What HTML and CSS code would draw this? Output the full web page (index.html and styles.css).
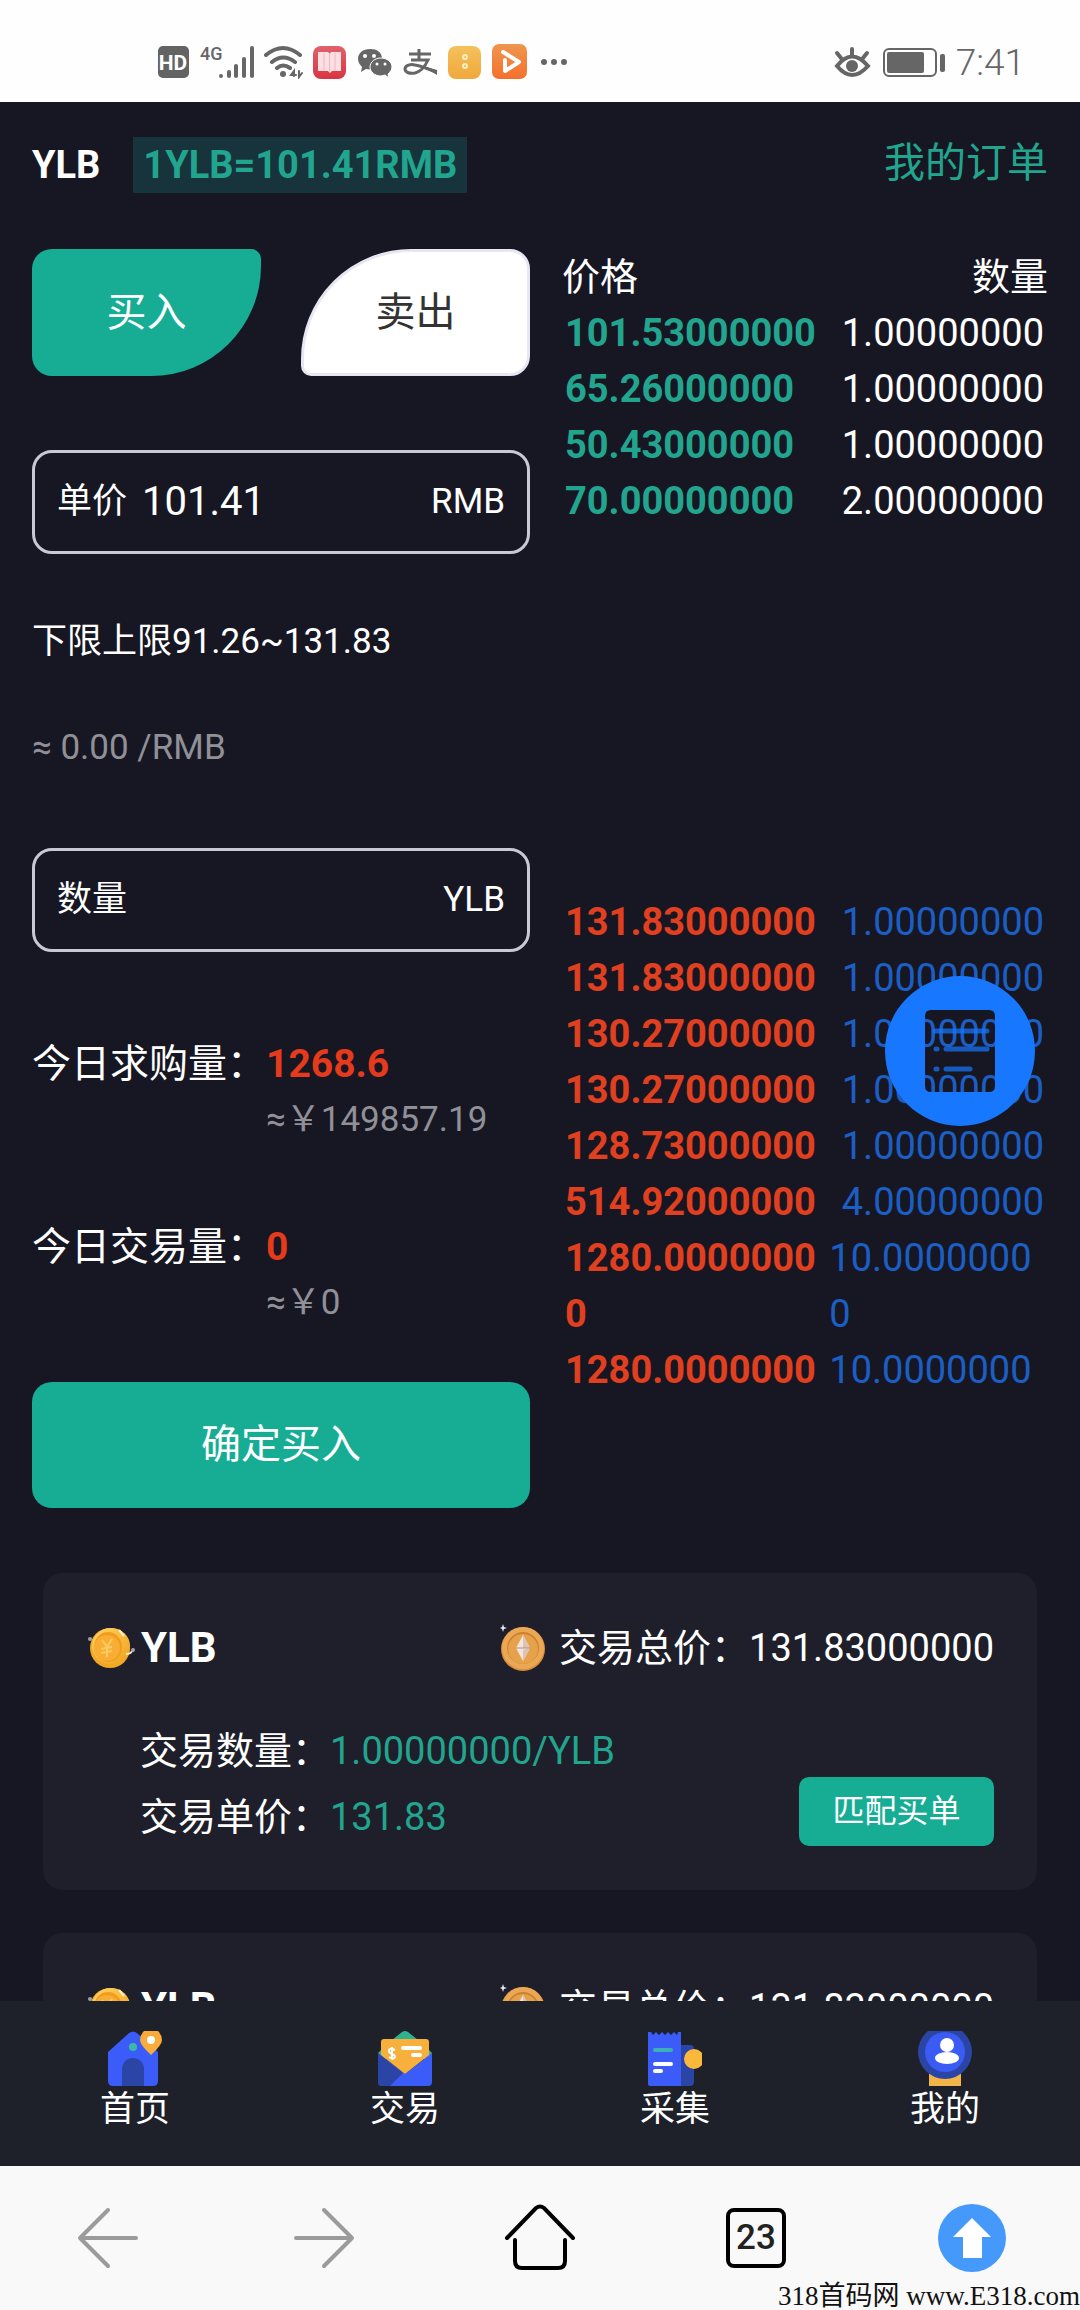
FILE: index.html
```html
<!DOCTYPE html>
<html lang="zh-CN">
<head>
<meta charset="utf-8">
<meta name="viewport" content="width=device-width, initial-scale=1">
<title>YLB 交易</title>
<link rel="stylesheet" href="styles.css">
</head>
<body>
<svg class="defs" aria-hidden="true">
  <defs>
    <linearGradient id="gold" x1="0" y1="0" x2="1" y2="1"><stop offset="0" stop-color="#ffd667"/><stop offset="1" stop-color="#f0a01c"/></linearGradient>
    <linearGradient id="red" x1="0" y1="0" x2="0" y2="1"><stop offset="0" stop-color="#e0626c"/><stop offset="1" stop-color="#d93443"/></linearGradient>
    <linearGradient id="amber" x1="0" y1="0" x2="0" y2="1"><stop offset="0" stop-color="#f5c15c"/><stop offset="1" stop-color="#efa83c"/></linearGradient>
    <linearGradient id="orange" x1="0" y1="0" x2="0" y2="1"><stop offset="0" stop-color="#ee9750"/><stop offset="1" stop-color="#f4702c"/></linearGradient>
    <symbol id="coin-yen" viewBox="0 0 48 44">
      <ellipse cx="22" cy="22" rx="20" ry="20" fill="#f2a822"/>
      <ellipse cx="23" cy="20" rx="19" ry="18" fill="url(#gold)"/>
      <ellipse cx="20" cy="21" rx="14" ry="15" fill="#f39c1c"/>
      <ellipse cx="19" cy="22" rx="13" ry="13" fill="#f8ae35"/>
      <path d="M14 14l5 7 5-8M19 21v10M13 23l11-2M13 27l11-2" fill="none" stroke="#fdca60" stroke-width="2"/>
      <path d="M31 4l5 6M38 28q5 0 6-3" stroke="#fff1c0" stroke-width="2" fill="none"/>
      <circle cx="2" cy="13" r="2" fill="#9da2ad"/><circle cx="45" cy="24" r="2" fill="#a3a3a8"/>
    </symbol>
    <symbol id="coin-eth" viewBox="0 0 46 48">
      <ellipse cx="23" cy="25" rx="22" ry="22" fill="#d88f3d"/>
      <ellipse cx="23" cy="24" rx="21" ry="21" fill="#eaa855"/>
      <circle cx="23" cy="24" r="16" fill="#cc8130"/>
      <circle cx="23" cy="25" r="15" fill="#e6a24a"/>
      <path d="M23 11l7 13-7 13-7-13z" fill="#f4e4dc"/>
      <path d="M23 11l7 13h-7zM23 26l7-2-7 13z" fill="#dcc3b8"/>
      <path d="M16 24h14" stroke="#b98a76" stroke-width="1"/>
      <path d="M3 0l1 3 3 1-3 1-1 3-1-3-2-1 2-1z" fill="#e3e3f2"/>
    </symbol>
  </defs>
</svg>
<div class="screen">
  <header class="status">
    <div class="status-group status-left">
      <svg width="32" height="34" viewBox="0 0 32 34"><rect y="1" width="31" height="32" rx="5" fill="#636363"/><text class="hd" x="15" y="25" text-anchor="middle">HD</text></svg>
      <svg width="54" height="34" viewBox="0 0 54 34"><text class="net" x="0" y="15">4G</text><g stroke="#666" stroke-width="4" stroke-linecap="round"><path d="M21 31v0M29 27v4M36 21v10M44 14v17M52 3v28"/></g></svg>
      <svg width="39" height="34" viewBox="0 0 39 34" fill="none" stroke="#666" stroke-width="4" stroke-linecap="round"><path d="M2 10q17-14 34 0M8 17q11-9 23 0M13 23q6-5 13 0"/><circle cx="19" cy="29" r="3" fill="#666" stroke="none"/><path d="M30 31V26l-3 4h5M35 26v6l3-4" stroke-width="2"/></svg>
      <svg width="33" height="34" viewBox="0 0 33 34"><rect y="1" width="33" height="33" rx="8" fill="url(#red)"/><path d="M5 7h10l2 2 1-2h10v19H19l-2 2-2-2H5z" fill="#fbdfe3"/><path d="M16.500 8v18M11 8v18M22 8v18" stroke="#f0b6bf" stroke-width="1"/></svg>
      <svg width="36" height="34" viewBox="0 0 36 34"><path d="M14 4C7 4 2 8 2 14c0 3 2 6 4 8l-1 5 5-3c10 2 16-3 16-10S21 4 14 4z" fill="#666"/><circle cx="9" cy="11" r="2" fill="#fff"/><circle cx="18" cy="11" r="2" fill="#fff"/><path d="M25 13c-6 0-11 4-11 9s5 9 11 9l4-1 4 3-1-4c2-2 4-4 4-7 0-5-5-9-11-9z" fill="#666" stroke="#fff" stroke-width="1"/><circle cx="21" cy="19" r="1.500" fill="#fff"/><circle cx="29" cy="19" r="1.500" fill="#fff"/></svg>
      <svg width="36" height="34" viewBox="0 0 36 34" fill="none" stroke="#666"><path d="M7 9h22M17 4v11M9 15h17q-5 11-13 13c-6 1-10-1-10-4 0-4 6-5 10-4 8 1 14 5 22 7" stroke-width="3"/><path d="M20 21l15 4v5z" fill="#666" stroke="none"/></svg>
      <svg width="33" height="34" viewBox="0 0 33 34"><rect y="1" width="33" height="33" rx="8" fill="url(#amber)"/><g fill="none" stroke="#fdeec2" stroke-width="2"><circle cx="17" cy="12" r="2"/><circle cx="17" cy="21" r="2"/></g></svg>
      <svg width="37" height="36" viewBox="0 0 37 36"><rect x="1" width="35" height="35" rx="7" fill="url(#orange)"/><path d="M12 8l16 10-14 9V16" fill="none" stroke="#fff" stroke-width="4" stroke-linejoin="round" stroke-linecap="round"/></svg>
      <svg width="30" height="34" viewBox="0 0 30 34" fill="#666"><circle cx="6" cy="17" r="3"/><circle cx="16" cy="17" r="3"/><circle cx="26" cy="17" r="3"/></svg>
    </div>
    <div class="status-group status-right">
      <svg width="38" height="34" viewBox="0 0 38 34" fill="none" stroke="#666" stroke-width="4" stroke-linecap="round"><path d="M3 20Q18 1 34 20Q18 38 3 20zM18 3v6M3 7l4 5M33 7l-4 5"/><circle cx="18" cy="20" r="6" fill="#666" stroke="none"/></svg>
      <svg width="62" height="34" viewBox="0 0 62 34"><rect x="1" y="3" width="52" height="27" rx="5" fill="none" stroke="#666" stroke-width="2"/><rect x="4" y="6" width="37" height="21" rx="2" fill="#666"/><rect x="57" y="8" width="5" height="18" rx="2" fill="#666"/></svg>
      <time class="clock">7:41</time>
    </div>
  </header>

  <main class="content">
    <div class="topline">
      <h1 class="coin-name">YLB</h1>
      <span class="rate">1YLB=101.41RMB</span>
      <a class="orders-link" href="#orders">我的订单</a>
    </div>

    <div class="trade">
      <form class="form">
        <div class="sides">
          <button type="button" class="side side-buy">买入</button>
          <button type="button" class="side side-sell">卖出</button>
        </div>
        <div class="field">
          <label for="price">单价</label>
          <input id="price" type="text" value="101.41">
          <span>RMB</span>
        </div>
        <p class="limits">下限上限91.26~131.83</p>
        <p class="approx">≈ 0.00 /RMB</p>
        <div class="field">
          <label for="amount">数量</label>
          <input id="amount" type="text">
          <span>YLB</span>
        </div>
        <dl class="stat">
          <dt>今日求购量：</dt>
          <dd class="stat-value">1268.6</dd>
          <dd class="stat-sub">≈￥149857.19</dd>
        </dl>
        <dl class="stat stat-second">
          <dt>今日交易量：</dt>
          <dd class="stat-value">0</dd>
          <dd class="stat-sub">≈￥0</dd>
        </dl>
        <button type="submit" class="confirm">确定买入</button>
      </form>

      <section class="book">
        <div class="book-head"><span>价格</span><span>数量</span></div>
        <div class="bids">
          <table class="orders">
            <tr><td>101.53000000</td><td><span>1.00000000</span></td></tr>
            <tr><td>65.26000000</td><td><span>1.00000000</span></td></tr>
            <tr><td>50.43000000</td><td><span>1.00000000</span></td></tr>
            <tr><td>70.00000000</td><td><span>2.00000000</span></td></tr>
          </table>
        </div>
        <div class="asks">
          <table class="orders">
            <tr><td>131.83000000</td><td><span>1.00000000</span></td></tr>
            <tr><td>131.83000000</td><td><span>1.00000000</span></td></tr>
            <tr><td>130.27000000</td><td><span>1.00000000</span></td></tr>
            <tr><td>130.27000000</td><td><span>1.00000000</span></td></tr>
            <tr><td>128.73000000</td><td><span>1.00000000</span></td></tr>
            <tr><td>514.92000000</td><td><span>4.00000000</span></td></tr>
            <tr><td>1280.00000000</td><td><span>10.00000000</span></td></tr>
            <tr><td>1280.00000000</td><td><span>10.00000000</span></td></tr>
          </table>
          <button type="button" class="float" aria-label="订单列表">
            <svg width="150" height="150" viewBox="0 0 150 150">
              <path fill="#1777ff" fill-rule="evenodd" d="M75 0a75 75 0 1 1 0 150a75 75 0 1 1 0-150zM46 34q-6 0-6 6v70q0 6 6 6h58q6 0 6-6V40q0-6-6-6z"/>
              <g stroke="#1777ff" stroke-width="5" stroke-linecap="round" opacity=".7"><path d="M50 55h52M61 73h41M61 93h24M51 73h1M51 93h1"/></g>
            </svg>
          </button>
        </div>
      </section>
    </div>

    <section class="cards">
      <article class="card">
        <div class="card-head">
          <svg width="48" height="44"><use href="#coin-yen"/></svg>
          <h2>YLB</h2>
          <svg class="eth" width="46" height="48"><use href="#coin-eth"/></svg>
          <p>交易总价：131.83000000</p>
        </div>
        <div class="card-body">
          <ul class="facts">
            <li>交易数量：<b>1.00000000/YLB</b></li>
            <li>交易单价：<b>131.83</b></li>
          </ul>
          <button type="button" class="match">匹配买单</button>
        </div>
      </article>
      <article class="card">
        <div class="card-head">
          <svg width="48" height="44"><use href="#coin-yen"/></svg>
          <h2>YLB</h2>
          <svg class="eth" width="46" height="48"><use href="#coin-eth"/></svg>
          <p>交易总价：131.83000000</p>
        </div>
      </article>
    </section>
  </main>

  <nav class="tabs">
    <a href="#home">
      <svg width="54" height="55" viewBox="0 0 54 55"><path d="M0 21L20 3Q25-2 30 3L50 21V50Q50 55 45 55H5Q0 55 0 50z" fill="#3c5cfa"/><path d="M14 55V38a11 11 0 0 1 22 0v17z" fill="#2b45a6"/><circle cx="25" cy="16" r="4" fill="#3bb9a6"/><path d="M36 0h14q4 4 4 9 0 5-11 15Q32 14 32 9q0-5 4-9z" fill="#f8ac3a"/><circle cx="43" cy="9" r="4" fill="#fff"/></svg>
      首页
    </a>
    <a href="#trade">
      <svg width="54" height="55" viewBox="0 0 54 55"><path d="M14 9L24 1q3-2 6 0l10 8zM0 22l4-4h46l4 4v6H0z" fill="#2fb28f"/><path d="M0 22l27 21 27-21v29q0 4-4 4H4q-4 0-4-4z" fill="#3c5cfa"/><path d="M0 22l25 20-13 13H4q-4 0-4-4z" fill="#2b45a6"/><path d="M3 11q0-3 3-3h42q3 0 3 3v13L27 43 3 24z" fill="#f8b03c"/><path d="M25 17h17M35 24h7" stroke="#fff" stroke-width="4" stroke-linecap="round"/><path d="M17 19q-6-3-6 1 0 2 3 3t3 3q-1 3-6 0M14 16v13" fill="none" stroke="#fff" stroke-width="2"/></svg>
      交易
    </a>
    <a href="#collect">
      <svg width="54" height="55" viewBox="0 0 54 55"><path d="M30 14h12q4 0 4 4v33q0 4-4 4H30z" fill="#2b45a6"/><path d="M0 1l3 0 2 3 3-3 3 3 3-3 3 3 3-3 3 3 3-3 3 3 1-3h3v54H2q-2 0-2-2z" fill="#3c5cfa"/><circle cx="46" cy="28" r="10" fill="#fbb83c"/><path d="M7 19h16" stroke="#3bb0b8" stroke-width="4" stroke-linecap="round"/><path d="M7 33h16M7 40h6" stroke="#fff" stroke-width="4" stroke-linecap="round"/></svg>
      采集
    </a>
    <a href="#me">
      <svg width="54" height="55" viewBox="0 0 54 55"><path d="M11 40h32v15H11z" fill="#f3b548"/><circle cx="27" cy="21" r="27" fill="#2b45a6"/><circle cx="27" cy="21" r="20" fill="#3b5bf5"/><circle cx="29" cy="14" r="7" fill="#fff"/><ellipse cx="29" cy="27" rx="12" ry="6" fill="#fff"/></svg>
      我的
    </a>
  </nav>

  <footer class="browser">
    <button type="button" aria-label="后退"><svg width="64" height="64" viewBox="0 0 64 64" class="arrow"><path d="M32 4L4 32l28 28M4 32h56"/></svg></button>
    <button type="button" aria-label="前进"><svg width="64" height="64" viewBox="0 0 64 64" class="arrow"><path d="M32 4l28 28-28 28M60 32H4"/></svg></button>
    <button type="button" aria-label="主页"><svg width="72" height="68" viewBox="0 0 72 68" class="house"><path d="M3 34L32 4q4-3 8 0l29 30M11 36v21q0 7 7 7h36q7 0 7-7V36"/></svg></button>
    <button type="button" aria-label="标签页"><span class="count">23</span></button>
    <button type="button" aria-label="回到顶部"><svg width="68" height="68" viewBox="0 0 68 68"><circle cx="34" cy="34" r="34" fill="#4499fb"/><path d="M34 14l19 19h-9v21H25V33h-10z" fill="#fff"/></svg></button>
    <span class="watermark">318首码网 www.E318.com</span>
  </footer>
</div>
</body>
</html>
```

FILE: styles.css
```css
* { box-sizing: border-box; margin: 0; padding: 0; }

body {
  background: #171724;
  color: #fff;
  font-family: Roboto, "Noto Sans CJK SC", sans-serif;
  font-size: 38px;
  line-height: 56px;
}

button, input { font: inherit; color: inherit; background: none; border: 0; }
a { text-decoration: none; color: inherit; }
svg { display: block; flex: none; }
.defs { position: absolute; width: 0; height: 0; }

.screen { display: flex; flex-direction: column; height: 100vh; }

/* phone status bar */
.status {
  flex: none;
  display: flex;
  justify-content: space-between;
  height: 102px;
  padding: 22px 55px 0 158px;
  background: #fefefe;
  color: #666;
}
.status-group { display: flex; align-items: center; gap: 10px; height: 80px; }
.status-right { height: 82px; gap: 11px; }
.clock { font-size: 37px; font-weight: 300; }
.hd { font-size: 21px; font-weight: 700; fill: #fff; }
.net { font-size: 18px; font-weight: 500; fill: #666; }

/* scrolling content */
.content {
  flex: 1;
  min-height: 0;
  overflow-y: auto;
  scrollbar-width: none;
  padding: 35px 32px 0;
}
.topline { display: flex; align-items: center; margin-bottom: 56px; }
.coin-name { font-size: 38px; margin-right: 33px; }
.rate {
  padding: 0 10px;
  background: #17333b;
  color: #22a58e;
  font-weight: 700;
}
.orders-link {
  align-self: flex-start;
  margin-left: auto;
  color: #22a58e;
  font-size: 41px;
  line-height: 52px;
}

.trade { display: grid; grid-template-columns: minmax(0, 498fr) minmax(0, 486fr); gap: 32px; }
.form { display: flex; flex-direction: column; }

.sides { display: grid; grid-template-columns: 1fr 1fr; gap: 40px; margin-bottom: 74px; }
.side { height: 127px; font-size: 40px; }
.side-buy { background: #17ad95; border-radius: 20px 10px 110px 20px; }
.side-sell {
  background: #fff;
  border: 3px solid #e8e6f2;
  border-radius: 110px 20px 20px 10px;
  color: #333;
}

.field {
  display: flex;
  align-items: center;
  height: 104px;
  padding: 0 22px;
  border: 3px solid #c9c8d3;
  border-radius: 20px;
  font-size: 35px;
}
.field input { flex: 1; min-width: 0; padding: 0 15px; font-size: 40px; outline: 0; }

.limits, .approx { font-size: 35px; }
.limits { margin: 60px 0 50px; }
.approx { margin-bottom: 72px; }
.approx, .stat-sub { color: #909096; }

.stat { display: grid; grid-template-columns: 234px 1fr; margin-top: 84px; }
.stat-second { margin-top: 71px; }
.stat dt { font-size: 39px; white-space: nowrap; }
.stat-value { color: #e63a1c; font-size: 39px; font-weight: 700; }
.stat-sub { grid-column: 2; font-size: 35px; }

.confirm {
  height: 126px;
  margin-top: 51px;
  border-radius: 20px;
  background: #17ad95;
  font-size: 40px;
}

/* order book */
.book-head { display: flex; justify-content: space-between; }
.bids { min-height: 589px; }
.asks { position: relative; height: 504px; overflow: hidden; }
.orders { width: 100%; table-layout: fixed; border-collapse: collapse; }
.orders td { vertical-align: top; word-break: break-all; }
.orders td:first-child {
  width: 55%;
  padding: 0 6px 0 3px;
  color: #22a58e;
  font-weight: 700;
}
.orders td:last-child { padding-right: 4px; }
.orders td span { display: block; width: fit-content; margin-left: auto; }
.asks .orders td:first-child { color: #e0401f; }
.asks .orders td:last-child { color: #1c5fc4; }

.float {
  position: absolute;
  top: 82px;
  right: 13px;
  border-radius: 50%;
}

/* sell orders */
.cards { display: grid; gap: 43px; margin: 65px 11px 0; }
.card {
  min-height: 317px;
  padding: 47px 43px 40px 45px;
  border-radius: 20px;
  background: #1e1f2a;
}
.card-head { display: flex; align-items: center; gap: 5px; }
.card-head h2 { font-size: 42px; }
.card-head .eth { margin-left: auto; margin-right: 8px; }
.card-body { display: flex; justify-content: space-between; align-items: flex-end; margin-top: 42px; }
.facts { list-style: none; padding-left: 52px; line-height: 66px; }
.facts b { color: #22a58e; font-weight: 400; }
.match {
  width: 195px;
  height: 69px;
  margin-bottom: 4px;
  padding-bottom: 2px;
  border-radius: 10px;
  background: #17ad95;
  font-size: 32px;
}

/* app tabs */
.tabs {
  flex: none;
  display: flex;
  height: 165px;
  padding-top: 30px;
  background: #1e202a;
  font-size: 35px;
  line-height: 48px;
}
.tabs a { flex: 1; display: flex; flex-direction: column; align-items: center; }

/* browser toolbar */
.browser { position: relative; flex: none; display: flex; height: 144px; background: #f9f9fa; }
.browser button { flex: 1; display: flex; align-items: center; justify-content: center; }
.arrow { fill: none; stroke: #9b9b9b; stroke-width: 4; stroke-linecap: round; stroke-linejoin: round; }
.house { fill: none; stroke: #000; stroke-width: 4; stroke-linecap: round; }
.count {
  width: 60px;
  height: 60px;
  border: 4px solid #000;
  border-radius: 8px;
  color: #222;
  font-size: 35px;
  font-weight: 500;
  line-height: 52px;
}
.watermark {
  position: absolute;
  right: 0;
  bottom: 0;
  color: #111;
  font: 27px/28px "Liberation Serif", "Noto Sans CJK SC", serif;
}
```
